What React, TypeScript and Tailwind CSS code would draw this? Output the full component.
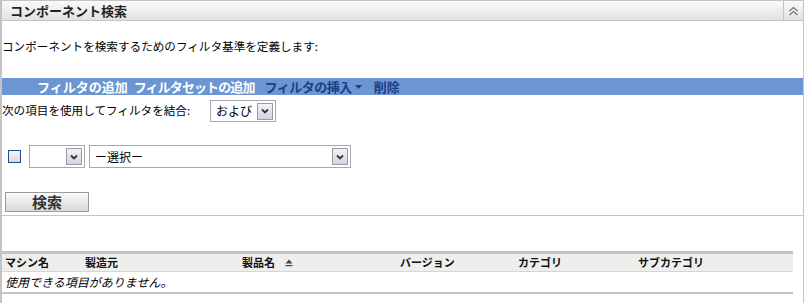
import React from "react";

const font = { fontFamily: '"Noto Sans CJK JP", "Noto Sans", sans-serif' };

function DropButton() {
  return (
    <span className="flex items-center justify-center w-[16px] h-[17px] border border-[#9a9aa6] bg-gradient-to-b from-[#f2f2f6] to-[#d2d4e0]">
      <svg width="8" height="6" viewBox="0 0 8 6">
        <path d="M1 1.5 L4 4.5 L7 1.5" fill="none" stroke="#333" strokeWidth="1.8" />
      </svg>
    </span>
  );
}

function FakeSelect({ width, label }: { width: string; label?: string }) {
  return (
    <div
      className={`flex items-center justify-between h-full ${width} border border-[#a5a8ae] bg-white pl-[5px] pr-[2px]`}
    >
      <span className="text-[12px] text-black leading-none">{label}</span>
      <DropButton />
    </div>
  );
}

const columns = [
  { label: "マシン名", width: "w-[80px]" },
  { label: "製造元", width: "w-[157px]" },
  { label: "製品名", width: "w-[158px]", sort: true },
  { label: "バージョン", width: "w-[118px]" },
  { label: "カテゴリ", width: "w-[120px]" },
  { label: "サブカテゴリ", width: "w-[120px]" },
];

export default function App() {
  return (
    <div className="w-[809px] h-[303px] bg-white text-black overflow-hidden" style={font}>
      <div className="w-[804px] border-t border-l-2 border-r border-b border-[#c4c4c4]">
        <div className="flex h-[20px] border-b border-[#c4c4c4] bg-gradient-to-b from-[#fafafa] to-[#e2e2e2]">
          <div className="flex-1 flex items-center pl-[8px] text-[13px] font-bold text-[#222]">
            コンポーネント検索
          </div>
          <div className="w-[20px] flex items-center justify-center border-l border-[#c4c4c4]">
            <svg width="11" height="10" viewBox="0 0 11 10">
              <path d="M1.5 5 L5.5 1.5 L9.5 5 M1.5 9 L5.5 5.5 L9.5 9" fill="none" stroke="#777" strokeWidth="1.3" />
            </svg>
          </div>
        </div>

        <div className="mt-[15px] h-[20px] leading-[20px] text-[11.6px]">
          コンポーネントを検索するためのフィルタ基準を定義します:
        </div>

        <div className="mt-[22px] h-[17px] flex items-center bg-[#6b96d1] pl-[35px] text-[13px] font-bold leading-none">
          <span className="text-white">フィルタの追加</span>
          <span className="ml-[6px] text-white tracking-[-0.9px]">フィルタセットの追加</span>
          <span className="ml-[10px] text-[#1c3d87] flex items-center gap-[3px] tracking-[-0.5px]">
            フィルタの挿入
            <svg width="7" height="4" viewBox="0 0 7 4">
              <path d="M0 0 H7 L3.5 4 Z" fill="#1c3d87" />
            </svg>
          </span>
          <span className="ml-[12px] text-[#1c3d87]">削除</span>
        </div>

        <div className="mt-[5px] h-[22px] flex items-center">
          <span className="text-[11.6px] w-[208px]">次の項目を使用してフィルタを結合:</span>
          <FakeSelect width="w-[66px]" label="および" />
        </div>

        <div className="mt-[23px] h-[23px] flex items-center">
          <span className="ml-[6px] w-[13px] h-[13px] border border-[#1e4f8c] bg-gradient-to-b from-[#f6f6f6] to-[#dcdcdc]" />
          <div className="ml-[8px] h-full">
            <FakeSelect width="w-[56px]" />
          </div>
          <div className="ml-[4px] h-full">
            <FakeSelect width="w-[262px]" label="ー選択ー" />
          </div>
        </div>

        <div className="mt-[21px] mb-[2px] pl-[3px]">
          <button className="w-[84px] h-[20px] border border-[#9c9c9c] bg-gradient-to-b from-[#fbfbfb] to-[#d8d8d4] text-[15px] font-bold text-[#333] leading-none">
            検索
          </button>
        </div>
      </div>

      <div className="w-[804px] h-[91px] border-l-2 border-r border-[#c4c4c4] pt-[35px]">
        <div className="w-[791px] border-t-[3px] border-b-2 border-[#c4c4be]">
          <div className="flex h-[18px] items-center bg-[#eeeeec] border-b border-[#d6d6d2] pl-[3px] text-[11px] font-bold text-[#111]">
            {columns.map((c) => (
              <div key={c.label} className={`${c.width} flex items-center`}>
                {c.label}
                {c.sort && (
                  <svg className="ml-[10px]" width="8" height="8" viewBox="0 0 8 8">
                    <path d="M0.5 4.5 L4 0.5 L7.5 4.5 Z" fill="#444" />
                    <rect x="0.5" y="6" width="7" height="1.2" fill="#444" />
                  </svg>
                )}
              </div>
            ))}
          </div>
          <div className="h-[20px] flex items-center pl-[3px] text-[12px] italic">
            使用できる項目がありません。
          </div>
        </div>
      </div>
    </div>
  );
}
